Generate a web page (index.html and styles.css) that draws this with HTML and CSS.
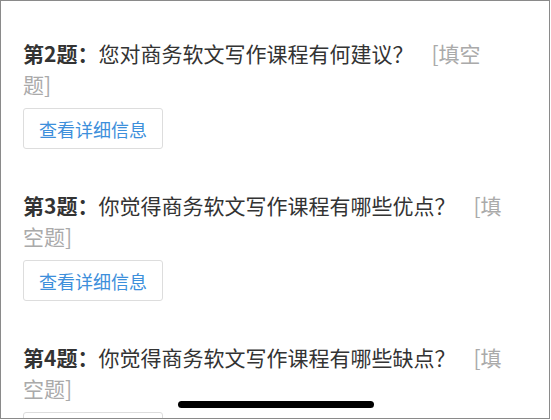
FILE: index.html
```html
<!DOCTYPE html>
<html lang="zh-CN">
<head>
  <meta charset="UTF-8">
  <meta name="viewport" content="width=device-width, initial-scale=1.0">
  <title>问卷详情</title>
  <link rel="stylesheet" href="styles.css">
</head>
<body>
  <div class="screen">
    <ul class="question-list">
      <li class="question">
        <p class="question-title"><b>第2题：</b>您对商务软文写作课程有何建议？<span class="question-type">[填空题]</span></p>
        <button class="detail-button">查看详细信息</button>
      </li>
      <li class="question">
        <p class="question-title"><b>第3题：</b>你觉得商务软文写作课程有哪些优点？<span class="question-type">[填空题]</span></p>
        <button class="detail-button">查看详细信息</button>
      </li>
      <li class="question">
        <p class="question-title"><b>第4题：</b>你觉得商务软文写作课程有哪些缺点？<span class="question-type">[填空题]</span></p>
        <button class="detail-button">查看详细信息</button>
      </li>
    </ul>
    <div class="home-indicator"></div>
  </div>
</body>
</html>
```

FILE: styles.css
```css
body {
  margin: 0;
  background-color: #fff;
  font-family: "Noto Sans CJK SC", "Noto Sans", sans-serif;
}

.screen {
  position: relative;
  width: 548px;
  height: 417px;
  border: 1px solid #8a8a8a;
  overflow: hidden;
  background-color: #fff;
}

.question-list {
  list-style-type: none;
  margin: 0;
  padding: 37px 0 0 22px;
}

.question {
  margin-bottom: 41px;
}

.question-title {
  width: 482px;
  margin: 0;
  font-size: 21px;
  line-height: 31px;
  color: #333;
}

.question-title b {
  font-weight: bold;
}

.question-type {
  margin-left: 18px;
  color: #aaa;
}

.detail-button {
  display: block;
  width: 140px;
  height: 41px;
  margin-top: 8px;
  padding: 0;
  border: 1px solid #ddd;
  border-radius: 3px;
  background-color: #fff;
  font-family: inherit;
  font-size: 18px;
  color: #3d8fdb;
}

.home-indicator {
  position: absolute;
  left: 177px;
  bottom: 10px;
  width: 196px;
  height: 7px;
  border-radius: 4px;
  background-color: #000;
}
```
